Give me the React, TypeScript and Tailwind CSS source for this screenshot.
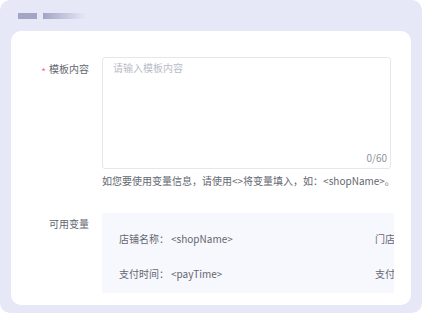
import React from "react";

export default function App() {
  const font = { fontFamily: '"Noto Sans CJK SC", "Noto Sans", sans-serif' };
  return (
    <div className="w-[422px] h-[313px] bg-white" style={font}>
      <div className="w-[422px] h-[313px] rounded-[10px] bg-[#e7e8f7] pt-[13px] pl-[11px]">
        <div className="flex items-center gap-[6px] pl-[7px] h-[6px]">
          <div className="w-[19px] h-[6px] bg-[#a3a5c5]" />
          <div className="w-[43px] h-[6px] bg-gradient-to-r from-[#a3a5c5] to-[#e7e8f7]" />
        </div>
        <div className="mt-[12px] w-[400px] h-[274px] rounded-[10px] bg-white pt-[26px] overflow-hidden">
          <div className="flex">
            <div className="w-[91px] pr-[13px] pt-[2px] text-right text-[10px] leading-[20px] text-[#646770] shrink-0 flex justify-end items-center h-[22px]">
              <span className="text-[#f56c7c] text-[10px] leading-[10px] mr-[3px] mt-[5px]">*</span>
              <span>模板内容</span>
            </div>
            <div>
              <div className="w-[289px] h-[112px] border border-[#e4e7ed] rounded-[3px] relative">
                <div className="pl-[10px] pt-[2px] text-[10px] leading-[16px] text-[#b8bcc6]">请输入模板内容</div>
                <div className="absolute right-[3px] bottom-[2px] text-[10px] leading-[16px] text-[#909399]">0/60</div>
              </div>
              <div className="mt-[2px] text-[10px] leading-[20px] text-[#646770] whitespace-nowrap">
                如您要使用变量信息，请使用&lt;&gt;将变量填入，如：&lt;shopName&gt;。
              </div>
            </div>
          </div>
          <div className="flex mt-[22px]">
            <div className="w-[91px] pr-[13px] pt-[1px] text-right text-[10px] leading-[20px] text-[#646770] shrink-0">
              可用变量
            </div>
            <div className="w-[292px] h-[80px] bg-[#f7f8fd] overflow-hidden pl-[17px] pt-[16px] text-[10px] leading-[20px] text-[#646770]">
              <div className="flex flex-col gap-[15px]">
                <div className="flex whitespace-nowrap">
                  <div className="w-[256px] shrink-0">店铺名称：<span className="ml-[2px]">&lt;shopName&gt;</span></div>
                  <div className="shrink-0">门店</div>
                </div>
                <div className="flex whitespace-nowrap">
                  <div className="w-[256px] shrink-0">支付时间：<span className="ml-[2px]">&lt;payTime&gt;</span></div>
                  <div className="shrink-0">支付</div>
                </div>
              </div>
            </div>
          </div>
        </div>
      </div>
    </div>
  );
}
